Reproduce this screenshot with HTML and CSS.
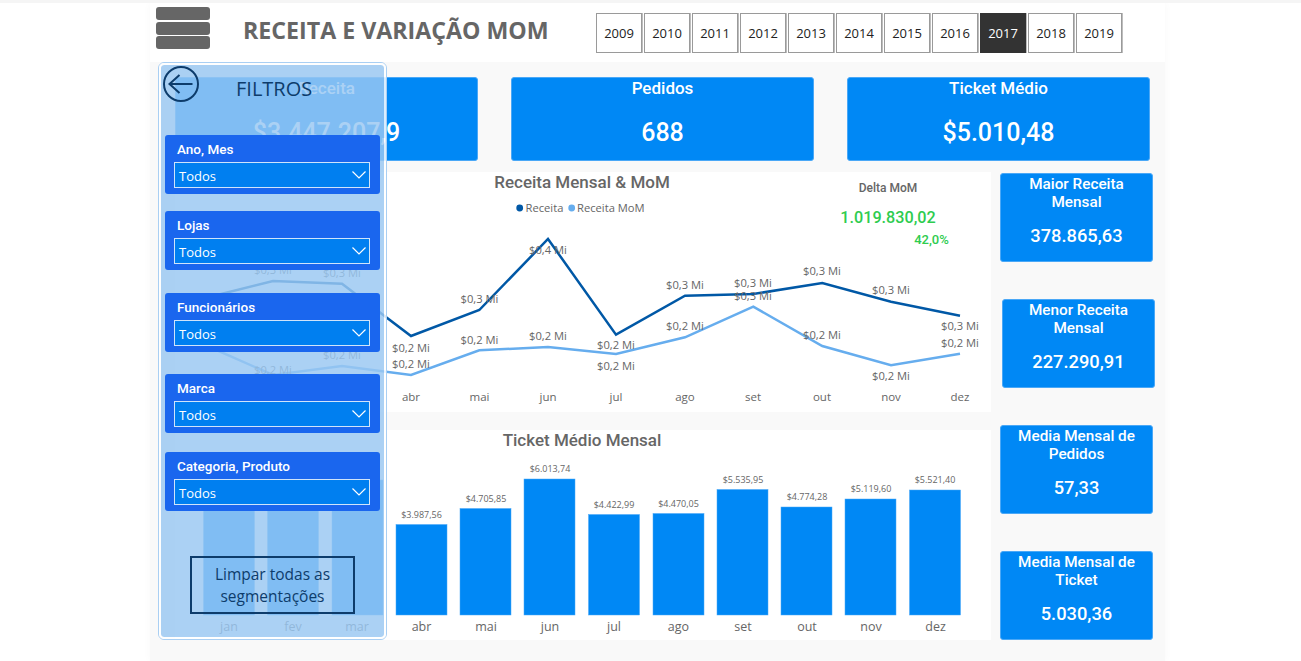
FILE: index.html
```html
<!DOCTYPE html>
<html>

<head>
  <title>Receita e Variação MoM</title>
  <link rel="stylesheet" href="styles.css">
</head>

<body>
  <div class="canvas">

    <div class="header">
      <div class="menu"><span></span><span></span><span></span></div>
      <h1 class="title">RECEITA E VARIAÇÃO MOM</h1>
      <div class="years">
        <div class="year">2009</div>
        <div class="year">2010</div>
        <div class="year">2011</div>
        <div class="year">2012</div>
        <div class="year">2013</div>
        <div class="year">2014</div>
        <div class="year">2015</div>
        <div class="year">2016</div>
        <div class="year selected">2017</div>
        <div class="year">2018</div>
        <div class="year">2019</div>
      </div>
    </div>

    <div class="kpis">
      <div class="kpi">
        <div class="kpi-name">Receita</div>
        <div class="kpi-value">$3.447.207,9</div>
      </div>
      <div class="kpi">
        <div class="kpi-name">Pedidos</div>
        <div class="kpi-value">688</div>
      </div>
      <div class="kpi">
        <div class="kpi-name">Ticket Médio</div>
        <div class="kpi-value">$5.010,48</div>
      </div>
    </div>

    <div class="content">
      <div class="charts">
        <div class="chart chart-lines">
          <svg viewBox="175 172 816 240" width="816" height="240">
            <text class="chart-title" x="582" y="182">Receita Mensal &amp; MoM</text>

            <circle cx="519.7" cy="208" r="3.4" fill="#0058a6" />
            <text class="legend" x="525.500" y="207.500">Receita</text>
            <circle cx="571.7" cy="208" r="3.4" fill="#66adee" />
            <text class="legend" x="577" y="207.500">Receita MoM</text>

            <text class="delta-name" x="888" y="188">Delta MoM</text>
            <text class="delta-value" x="888" y="217">1.019.830,02</text>
            <text class="delta-pct" x="931.500" y="239">42,0%</text>

            <polyline class="line line-dark" points="205,298 273,281 342,283.700 411,336 479.300,310 548,239 616,334.700 685,295.700 753.300,294 822.300,283 891,301.700 960,315.700" />
            <polyline class="line line-light" points="205,345 273,375 342,366 411,375 479.300,350.300 548,347 616,354 685,337.300 753.300,306.700 822.300,346 891,365.300 960,353.700" />

            <text class="point" x="273" y="269">$0,3 Mi</text>
            <text class="point" x="342" y="272">$0,3 Mi</text>
            <text class="point" x="411" y="347">$0,2 Mi</text>
            <text class="point" x="479.500" y="298">$0,3 Mi</text>
            <text class="point" x="548" y="249.500">$0,4 Mi</text>
            <text class="point" x="616" y="344">$0,2 Mi</text>
            <text class="point" x="685" y="284">$0,3 Mi</text>
            <text class="point" x="753" y="282">$0,3 Mi</text>
            <text class="point" x="822" y="270.500">$0,3 Mi</text>
            <text class="point" x="891" y="289.500">$0,3 Mi</text>
            <text class="point" x="960" y="325.500">$0,3 Mi</text>

            <text class="point" x="273" y="369">$0,2 Mi</text>
            <text class="point" x="342" y="354">$0,2 Mi</text>
            <text class="point" x="411" y="363">$0,2 Mi</text>
            <text class="point" x="479.500" y="339">$0,2 Mi</text>
            <text class="point" x="548" y="335">$0,2 Mi</text>
            <text class="point" x="616" y="365">$0,2 Mi</text>
            <text class="point" x="685" y="325">$0,2 Mi</text>
            <text class="point" x="753" y="295">$0,3 Mi</text>
            <text class="point" x="822" y="334">$0,2 Mi</text>
            <text class="point" x="891" y="375.500">$0,2 Mi</text>
            <text class="point" x="960" y="342">$0,2 Mi</text>

            <text class="month" x="205" y="396.500">jan</text>
            <text class="month" x="273" y="396.500">fev</text>
            <text class="month" x="342" y="396.500">mar</text>
            <text class="month" x="411" y="396.500">abr</text>
            <text class="month" x="479.500" y="396.500">mai</text>
            <text class="month" x="548" y="396.500">jun</text>
            <text class="month" x="616" y="396.500">jul</text>
            <text class="month" x="685" y="396.500">ago</text>
            <text class="month" x="753" y="396.500">set</text>
            <text class="month" x="822" y="396.500">out</text>
            <text class="month" x="891" y="396.500">nov</text>
            <text class="month" x="960" y="396.500">dez</text>
          </svg>
        </div>

        <div class="chart chart-bars">
          <svg viewBox="175 430 816 210" width="816" height="210">
            <text class="chart-title" x="582" y="440">Ticket Médio Mensal</text>

            <rect class="bar" x="203.500" y="495" width="51" height="120" />
            <rect class="bar" x="267.500" y="490" width="51" height="125" />
            <rect class="bar" x="332" y="480" width="51" height="135" />
            <rect class="bar" x="396" y="524.500" width="51" height="90.500" />
            <rect class="bar" x="460" y="508.500" width="51" height="106.500" />
            <rect class="bar" x="524" y="479" width="51" height="136" />
            <rect class="bar" x="588.500" y="514.500" width="51" height="100.500" />
            <rect class="bar" x="653" y="513.500" width="51" height="101.500" />
            <rect class="bar" x="717" y="489.500" width="51" height="125.500" />
            <rect class="bar" x="781" y="507" width="51" height="108" />
            <rect class="bar" x="845" y="499" width="51" height="116" />
            <rect class="bar" x="909.500" y="490" width="51" height="125" />

            <text class="bar-value" x="421.500" y="514">$3.987,56</text>
            <text class="bar-value" x="486" y="498">$4.705,85</text>
            <text class="bar-value" x="550" y="468">$6.013,74</text>
            <text class="bar-value" x="614" y="504">$4.422,99</text>
            <text class="bar-value" x="678.500" y="503">$4.470,05</text>
            <text class="bar-value" x="743" y="479">$5.535,95</text>
            <text class="bar-value" x="807" y="496.500">$4.774,28</text>
            <text class="bar-value" x="871" y="488">$5.119,60</text>
            <text class="bar-value" x="935" y="479">$5.521,40</text>

            <text class="month month-large" x="229" y="626">jan</text>
            <text class="month month-large" x="293" y="626">fev</text>
            <text class="month month-large" x="357" y="626">mar</text>
            <text class="month month-large" x="421.500" y="626">abr</text>
            <text class="month month-large" x="486" y="626">mai</text>
            <text class="month month-large" x="550" y="626">jun</text>
            <text class="month month-large" x="614" y="626">jul</text>
            <text class="month month-large" x="678.500" y="626">ago</text>
            <text class="month month-large" x="743" y="626">set</text>
            <text class="month month-large" x="807" y="626">out</text>
            <text class="month month-large" x="871" y="626">nov</text>
            <text class="month month-large" x="935.500" y="626">dez</text>
          </svg>
        </div>
      </div>

      <div class="side">
        <div class="side-card">
          <div class="side-name">Maior Receita Mensal</div>
          <div class="side-value">378.865,63</div>
        </div>
        <div class="side-card shifted">
          <div class="side-name">Menor Receita Mensal</div>
          <div class="side-value">227.290,91</div>
        </div>
        <div class="side-card">
          <div class="side-name">Media Mensal de Pedidos</div>
          <div class="side-value">57,33</div>
        </div>
        <div class="side-card">
          <div class="side-name">Media Mensal de Ticket</div>
          <div class="side-value">5.030,36</div>
        </div>
      </div>
    </div>

    <!-- painel de filtros aberto por cima do relatorio -->
    <div class="panel">
      <div class="panel-fill">
        <div class="panel-head">
          <svg class="back" viewBox="0 0 36 36" width="36" height="36">
            <circle cx="18" cy="18" r="17" />
            <path d="M6.500 18H29.500M16.500 9L6.500 18L16.500 27" />
          </svg>
          <div class="panel-title">FILTROS</div>
        </div>

        <div class="slicer">
          <div class="slicer-name">Ano, Mes</div>
          <div class="dropdown">Todos<svg viewBox="0 0 14 8" width="14" height="8"><path d="M0.500 0.500L7 7L13.500 0.500" /></svg></div>
        </div>
        <div class="slicer">
          <div class="slicer-name">Lojas</div>
          <div class="dropdown">Todos<svg viewBox="0 0 14 8" width="14" height="8"><path d="M0.500 0.500L7 7L13.500 0.500" /></svg></div>
        </div>
        <div class="slicer">
          <div class="slicer-name">Funcionários</div>
          <div class="dropdown">Todos<svg viewBox="0 0 14 8" width="14" height="8"><path d="M0.500 0.500L7 7L13.500 0.500" /></svg></div>
        </div>
        <div class="slicer">
          <div class="slicer-name">Marca</div>
          <div class="dropdown">Todos<svg viewBox="0 0 14 8" width="14" height="8"><path d="M0.500 0.500L7 7L13.500 0.500" /></svg></div>
        </div>
        <div class="slicer">
          <div class="slicer-name">Categoria, Produto</div>
          <div class="dropdown">Todos<svg viewBox="0 0 14 8" width="14" height="8"><path d="M0.500 0.500L7 7L13.500 0.500" /></svg></div>
        </div>

        <div class="clear-btn">Limpar todas as segmentações</div>
      </div>
    </div>

  </div>
</body>

</html>
```

FILE: styles.css
```css
* {
  box-sizing: border-box;
}

html,
body {
  height: 661px;
  overflow: hidden;
}

body {
  margin: 0;
  border-top: 3px solid #f5f5f5;
  background: #fff;
  font-family: "Open Sans", "Liberation Sans", sans-serif;
}

.canvas {
  position: relative;
  display: flex;
  flex-direction: column;
  width: 1015px;
  height: 658px;
  margin-left: 150px;
  background: #f9f9f9;
  box-shadow: 0 0 8px rgba(0, 0, 0, 0.03);
}

/* topo */
.header {
  display: flex;
  align-items: center;
  height: 59px;
  padding-left: 6px;
  background: #fff;
}

.menu {
  display: flex;
  flex-direction: column;
  gap: 1.500px;
  width: 54px;
  margin-top: -9px;
}

.menu span {
  height: 13px;
  border-radius: 3px;
  background: #666;
}

.title {
  width: 353px;
  margin: -5px 0 0 33px;
  font-size: 23.200px;
  font-weight: 700;
  color: #666;
  white-space: nowrap;
}

.years {
  display: flex;
  gap: 2px;
  margin-top: 1px;
}

.year {
  display: flex;
  align-items: center;
  justify-content: center;
  width: 46px;
  height: 40px;
  border: 1px solid #9a9a9a;
  box-shadow: 1px 0 0 #bdbdbd;
  background: #fff;
  font-size: 13px;
  color: #222;
}

.year.selected {
  border-color: #333;
  background: #333;
  color: #fff;
}

/* cartoes de cima */
.kpis {
  display: grid;
  grid-template-columns: repeat(3, 303px);
  gap: 33px;
  height: 84px;
  margin-top: 15px;
  padding-left: 25px;
}

.kpi {
  border: 1px solid #4aa8f7;
  border-radius: 3px;
  background: #0088f5;
  color: #fff;
  text-align: center;
  font-family: Roboto, sans-serif;
  font-weight: 500;
}

.kpi-name {
  font-size: 17px;
  line-height: 21px;
}

.kpi-value {
  margin-top: 16px;
  font-size: 25px;
  line-height: 36px;
}

/* graficos */
.content {
  display: flex;
  margin-top: 11px;
  padding-left: 25px;
}

.charts {
  display: flex;
  flex-direction: column;
  gap: 18px;
  width: 816px;
}

.chart {
  background: #fff;
}

.chart svg {
  display: block;
}

.chart-lines {
  height: 240px;
}

.chart-bars {
  height: 210px;
}

.chart text {
  text-anchor: middle;
  dominant-baseline: central;
  fill: #666;
}

.chart .chart-title {
  font-family: Roboto, sans-serif;
  font-size: 17px;
  font-weight: 500;
}

.chart .legend {
  text-anchor: start;
  font-size: 11.200px;
}

.chart .delta-name {
  font-family: Roboto, sans-serif;
  font-size: 12px;
  font-weight: 500;
}

.chart .delta-value {
  font-family: Roboto, sans-serif;
  font-size: 16.200px;
  font-weight: 500;
  fill: #2ecc4f;
}

.chart .delta-pct {
  font-family: Roboto, sans-serif;
  font-size: 13px;
  font-weight: 500;
  fill: #2ecc4f;
}

.line {
  fill: none;
  stroke-width: 2.500px;
}

.line-dark {
  stroke: #0058a6;
}

.line-light {
  stroke: #66adee;
}

.chart .point {
  font-size: 11.200px;
}

.chart .month {
  font-size: 11.500px;
}

.chart .month-large {
  font-size: 12.500px;
}

.bar {
  fill: #0088f5;
  stroke: #4aa8f7;
  stroke-width: 0.500px;
}

.chart .bar-value {
  font-size: 9px;
}

/* cartoes da direita */
.side {
  display: flex;
  flex-direction: column;
  gap: 37px;
  margin: 1px 0 0 9px;
}

.side-card {
  width: 153px;
  height: 89px;
  border: 1px solid #4aa8f7;
  border-radius: 3px;
  background: #0088f5;
  color: #fff;
  text-align: center;
  font-family: Roboto, sans-serif;
  font-weight: 500;
}

.side-card.shifted {
  margin-left: 2px;
}

.side-name {
  height: 50px;
  padding: 1px 8px 0;
  font-size: 15.300px;
  line-height: 18px;
}

.side-value {
  font-size: 18.300px;
  line-height: 24px;
}

/* painel de filtros */
.panel {
  position: absolute;
  left: 8px;
  top: 59px;
  width: 229px;
  height: 578px;
  padding: 2px;
  border: 1px solid #a9cff3;
  border-radius: 6px;
}

.panel-fill {
  height: 100%;
  padding: 1px 0 0 4px;
  border-radius: 3px;
  outline: 2px solid rgba(255, 255, 255, 0.85);
  background: rgba(154, 200, 242, 0.83);
}

.panel-head {
  position: relative;
  height: 69px;
}

.back {
  position: absolute;
  left: -2px;
  top: 0;
}

.back circle,
.back path {
  fill: none;
  stroke: #0d3c6b;
  stroke-width: 2px;
}

.panel-title {
  position: absolute;
  left: 71px;
  top: 10px;
  font-size: 20px;
  line-height: 26px;
  color: #0d3c6b;
}

.slicer {
  width: 215px;
  height: 59px;
  padding: 5px 10px 0 9px;
  border-radius: 3px;
  background: #1a66ee;
  color: #fff;
}

.slicer:nth-of-type(3) {
  margin-top: 17px;
}

.slicer:nth-of-type(4) {
  margin-top: 23px;
}

.slicer:nth-of-type(5) {
  margin-top: 22px;
}

.slicer:nth-of-type(6) {
  margin-top: 19px;
}

.slicer-name {
  padding-left: 3px;
  font-family: Roboto, sans-serif;
  font-size: 13.500px;
  font-weight: 500;
  line-height: 18px;
}

.dropdown {
  display: flex;
  align-items: center;
  justify-content: space-between;
  width: 196px;
  height: 26px;
  margin-top: 4px;
  padding: 1px 3px 0 4px;
  border: 1px solid #cfe4fb;
  background: #007ff0;
  font-size: 13px;
}

.dropdown svg {
  margin-top: -1px;
  fill: none;
  stroke: #fff;
  stroke-width: 1.200px;
}

.clear-btn {
  display: flex;
  align-items: center;
  width: 165px;
  height: 58px;
  margin: 45px 0 0 25px;
  padding: 0 8px;
  border: 2.500px solid #0d3c6b;
  font-size: 15.500px;
  line-height: 22px;
  text-align: center;
  color: #0d3c6b;
}
```
